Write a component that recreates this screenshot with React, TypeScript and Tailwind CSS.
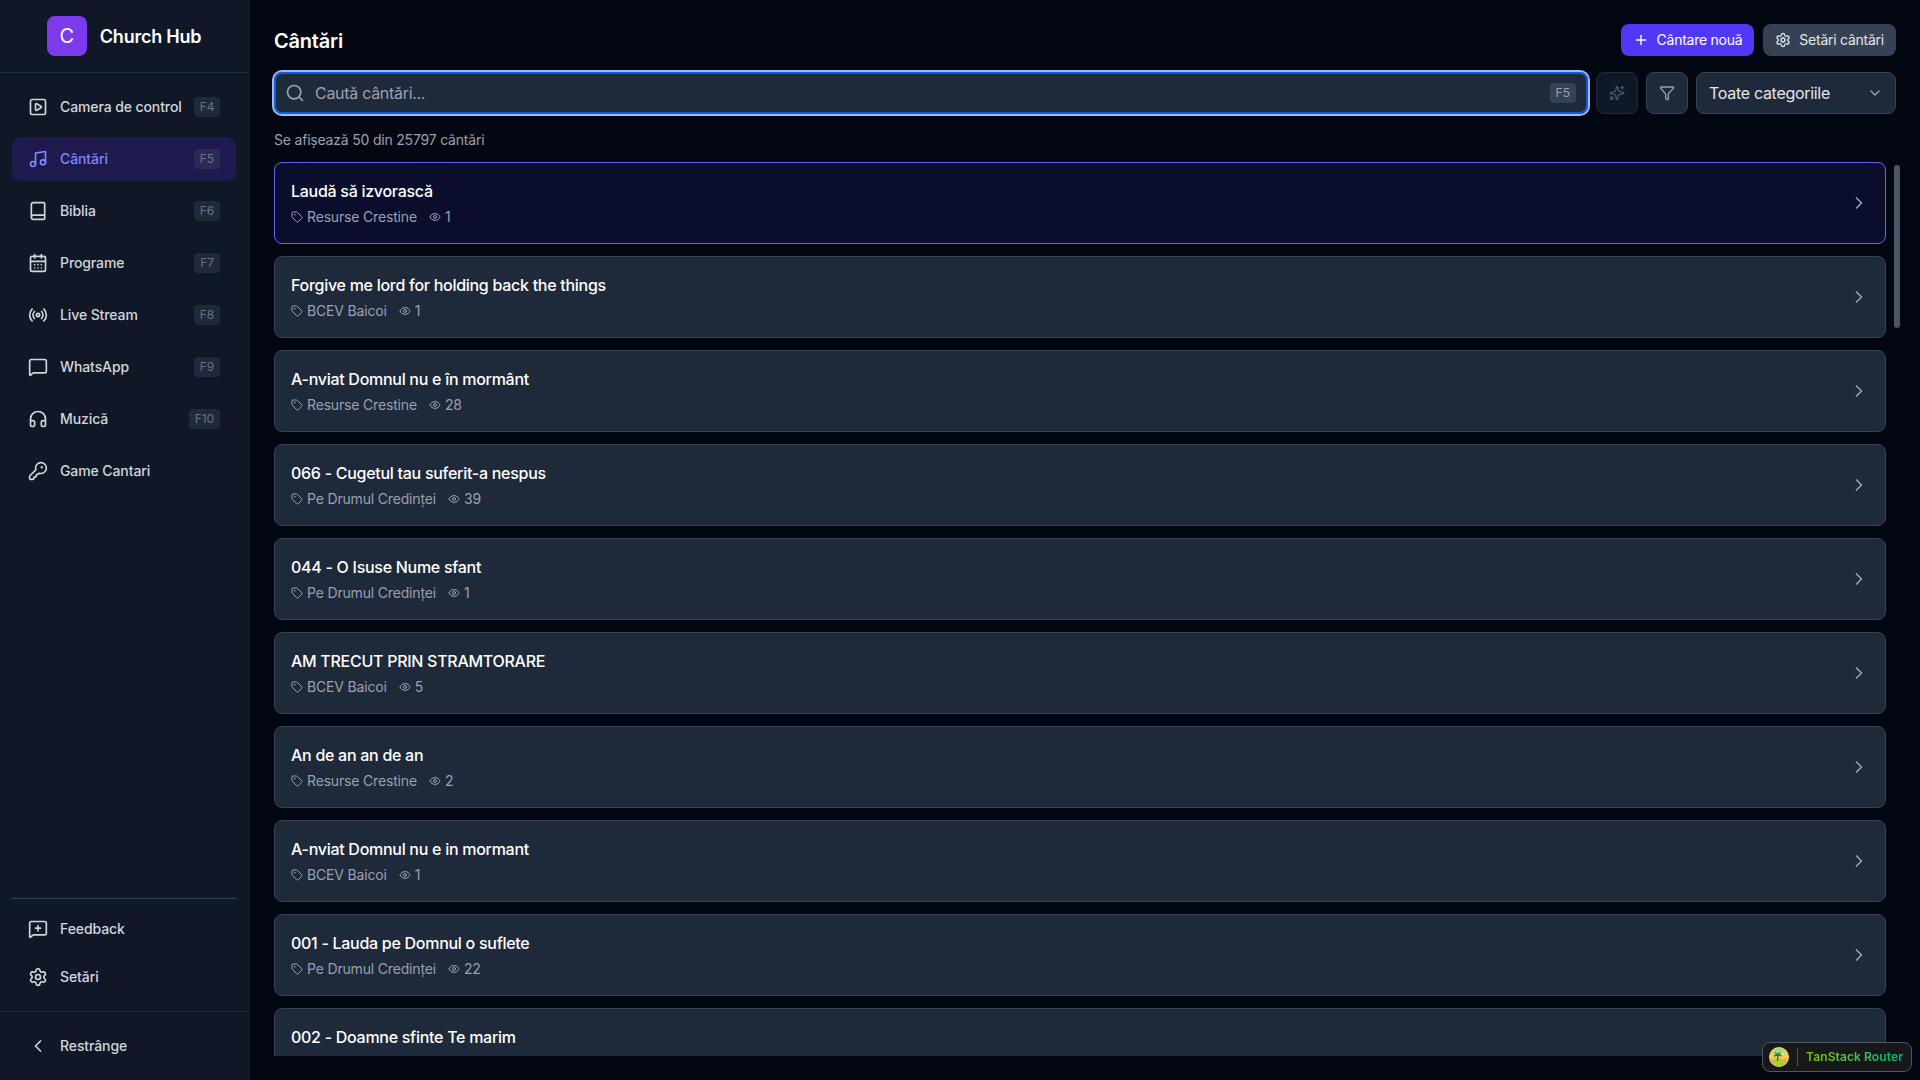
import {
  Book,
  CalendarDays,
  ChevronDown,
  ChevronLeft,
  ChevronRight,
  Eye,
  Funnel,
  Headphones,
  KeyRound,
  MessageSquare,
  MessageSquarePlus,
  Music,
  Plus,
  Radio,
  Search,
  Settings,
  Sparkles,
  SquarePlay,
  Tag,
} from "lucide-react";
import type { ComponentType } from "react";

type NavItem = { label: string; icon: ComponentType<{ className?: string }>; key?: string; active?: boolean };
type Song = { title: string; category: string; views: number };

const NAV: NavItem[] = [
  { label: "Camera de control", icon: SquarePlay, key: "F4" },
  { label: "Cântări", icon: Music, key: "F5", active: true },
  { label: "Biblia", icon: Book, key: "F6" },
  { label: "Programe", icon: CalendarDays, key: "F7" },
  { label: "Live Stream", icon: Radio, key: "F8" },
  { label: "WhatsApp", icon: MessageSquare, key: "F9" },
  { label: "Muzică", icon: Headphones, key: "F10" },
  { label: "Game Cantari", icon: KeyRound },
];

const SONGS: Song[] = [
  { title: "Laudă să izvorască", category: "Resurse Crestine", views: 1 },
  { title: "Forgive me lord for holding back the things", category: "BCEV Baicoi", views: 1 },
  { title: "A-nviat Domnul nu e în mormânt", category: "Resurse Crestine", views: 28 },
  { title: "066 - Cugetul tau suferit-a nespus", category: "Pe Drumul Credinței", views: 39 },
  { title: "044 - O Isuse Nume sfant", category: "Pe Drumul Credinței", views: 1 },
  { title: "AM TRECUT PRIN STRAMTORARE", category: "BCEV Baicoi", views: 5 },
  { title: "An de an an de an", category: "Resurse Crestine", views: 2 },
  { title: "A-nviat Domnul nu e in mormant", category: "BCEV Baicoi", views: 1 },
  { title: "001 - Lauda pe Domnul o suflete", category: "Pe Drumul Credinței", views: 22 },
  { title: "002 - Doamne sfinte Te marim", category: "Pe Drumul Credinței", views: 4 },
];

function NavLink({ item }: { item: NavItem }) {
  const Icon = item.icon;
  return (
    <a
      className={`flex h-11 items-center gap-3 rounded-lg px-4 text-sm font-medium tracking-[-0.1px] whitespace-nowrap ${
        item.active ? "bg-indigo-950 text-indigo-400" : "text-gray-300"
      }`}
    >
      <Icon className="h-5 w-5 shrink-0" />
      <span className="flex-1">{item.label}</span>
      {item.key && (
        <kbd
          className={`rounded px-1.5 py-0.5 font-[inherit] text-xs leading-4 font-normal text-gray-500 ${
            item.active ? "bg-[#2b2a55]" : "bg-gray-800"
          }`}
        >
          {item.key}
        </kbd>
      )}
    </a>
  );
}

function Sidebar() {
  return (
    <aside className="flex h-full w-[250px] shrink-0 flex-col border-r-2 border-gray-900 bg-gray-900">
      <div className="flex h-[73px] shrink-0 items-center justify-center gap-[13px] border-b border-gray-800">
        <div className="flex h-10 w-10 items-center justify-center rounded-lg bg-[#7c3aed] text-xl text-white">C</div>
        <span className="pt-px text-lg font-semibold tracking-[-0.25px] text-white">Church Hub</span>
      </div>
      <nav className="flex flex-1 flex-col gap-2 px-3 pt-3">
        {NAV.map((n) => (
          <NavLink key={n.label} item={n} />
        ))}
      </nav>
      <div className="px-3">
        <div className="flex flex-col gap-1 border-t border-gray-700 pt-2 pb-3">
          <NavLink item={{ label: "Feedback", icon: MessageSquarePlus }} />
          <NavLink item={{ label: "Setări", icon: Settings }} />
        </div>
      </div>
      <div className="border-t border-gray-800 px-3 py-3">
        <a className="flex h-11 items-center gap-3 rounded-lg px-4 text-sm font-medium tracking-[-0.1px] text-gray-300">
          <ChevronLeft className="h-5 w-5" />
          Restrânge
        </a>
      </div>
    </aside>
  );
}

function SongCard({ song, active }: { song: Song; active?: boolean }) {
  return (
    <div
      className={`flex h-[82px] shrink-0 items-center justify-between rounded-lg border px-4 ${
        active ? "border-indigo-500 bg-[#0a0d2b]" : "border-gray-700 bg-gray-800"
      }`}
    >
      <div className="min-w-0">
        <div className="text-base leading-6 font-medium tracking-[-0.28px] text-white">{song.title}</div>
        <div className="mt-1 flex items-center gap-3 text-sm leading-5 tracking-[-0.17px] text-gray-400">
          <span className="flex items-center gap-1">
            <Tag className="h-3 w-3" />
            {song.category}
          </span>
          <span className="flex items-center gap-1">
            <Eye className="h-3 w-3" />
            {song.views}
          </span>
        </div>
      </div>
      <ChevronRight className="h-5 w-5 text-gray-400" />
    </div>
  );
}

export default function App() {
  return (
    <div className="relative flex h-screen overflow-hidden bg-gray-950 font-['Inter',sans-serif]">
      <Sidebar />
      <main className="flex min-w-0 flex-1 flex-col px-6 pt-6 pb-6">
        <header className="flex h-8 shrink-0 items-center justify-between">
          <h1 className="pt-0.5 text-xl font-semibold tracking-[-0.2px] text-white">Cântări</h1>
          <div className="flex gap-[9px]">
            <button className="flex h-8 items-center gap-2 rounded-lg bg-indigo-600 px-3 text-sm font-normal tracking-[-0.25px] text-white">
              <Plus className="h-4 w-4" />
              Cântare nouă
            </button>
            <button className="flex h-8 items-center gap-2 rounded-lg bg-gray-700 px-3 text-sm font-normal tracking-[-0.25px] text-gray-200">
              <Settings className="h-4 w-4" />
              Setări cântări
            </button>
          </div>
        </header>

        <div className="mt-4 flex h-[42px] shrink-0 items-center gap-2">
          <div className="flex h-[42px] flex-1 items-center rounded-lg border-2 border-[#0a5fd6] bg-gray-800 pr-2.5 pl-[9px] outline-2 outline-[#a5b4fc]">
            <Search className="h-5 w-5 text-gray-400" />
            <span className="ml-2.5 flex-1 text-base tracking-[-0.3px] text-gray-400">Caută cântări...</span>
            <kbd className="rounded bg-gray-700 px-1.5 py-0.5 font-[inherit] text-xs leading-4 text-gray-400">F5</kbd>
          </div>
          <button className="flex h-[42px] w-[42px] items-center justify-center rounded-lg border border-gray-800 bg-gray-900 text-gray-600">
            <Sparkles className="h-4 w-4" />
          </button>
          <button className="flex h-[42px] w-[42px] items-center justify-center rounded-lg border border-gray-700 bg-gray-800 text-gray-400">
            <Funnel className="h-4 w-4" />
          </button>
          <div className="flex h-[42px] w-[200px] items-center justify-between rounded-lg border border-gray-700 bg-gray-800 px-3 text-base tracking-[-0.3px] text-gray-200">
            Toate categoriile
            <ChevronDown className="h-4 w-4 text-gray-400" />
          </div>
        </div>

        <p className="mt-4 shrink-0 text-sm leading-5 tracking-[-0.2px] text-gray-400">Se afișează 50 din 25797 cântări</p>

        <div className="mt-3 flex min-h-0 flex-1 flex-col gap-3 overflow-hidden pr-[10px]">
          {SONGS.map((s, i) => (
            <SongCard key={s.title} song={s} active={i === 0} />
          ))}
        </div>
      </main>

      <div className="absolute top-[165px] right-[20px] h-[163px] w-[6px] rounded-full bg-gray-600" />

      <button className="absolute right-2 bottom-2 flex h-[30px] items-center rounded-lg border border-gray-600 bg-[#18181b] pr-2 pl-[6px]">
        <svg viewBox="0 0 20 20" className="h-5 w-5">
          <defs>
            <linearGradient id="tsk" x1="0" y1="0" x2="0" y2="1">
              <stop offset="0" stopColor="#6fd8c0" />
              <stop offset="0.5" stopColor="#fcd34d" />
              <stop offset="0.8" stopColor="#fb7185" />
            </linearGradient>
          </defs>
          <circle cx="10" cy="10" r="9.4" fill="url(#tsk)" stroke="#e8d84a" strokeWidth="1.2" />
          <circle cx="14" cy="6" r="1.6" fill="#fde047" />
          <ellipse cx="10" cy="15.5" rx="6.5" ry="2.8" fill="#a3d626" />
          <path d="M8.5 14 9 7.5M5 9 9 7.5 12.5 9M6 5.5 9 7.5 11.5 5.5" stroke="#15803d" strokeWidth="1.4" fill="none" />
        </svg>
        <span className="mx-2 h-[18px] w-px bg-gray-600" />
        <span className="bg-gradient-to-r from-lime-500 to-emerald-500 bg-clip-text text-xs font-semibold tracking-[0.1px] text-transparent">
          TanStack Router
        </span>
      </button>
    </div>
  );
}
